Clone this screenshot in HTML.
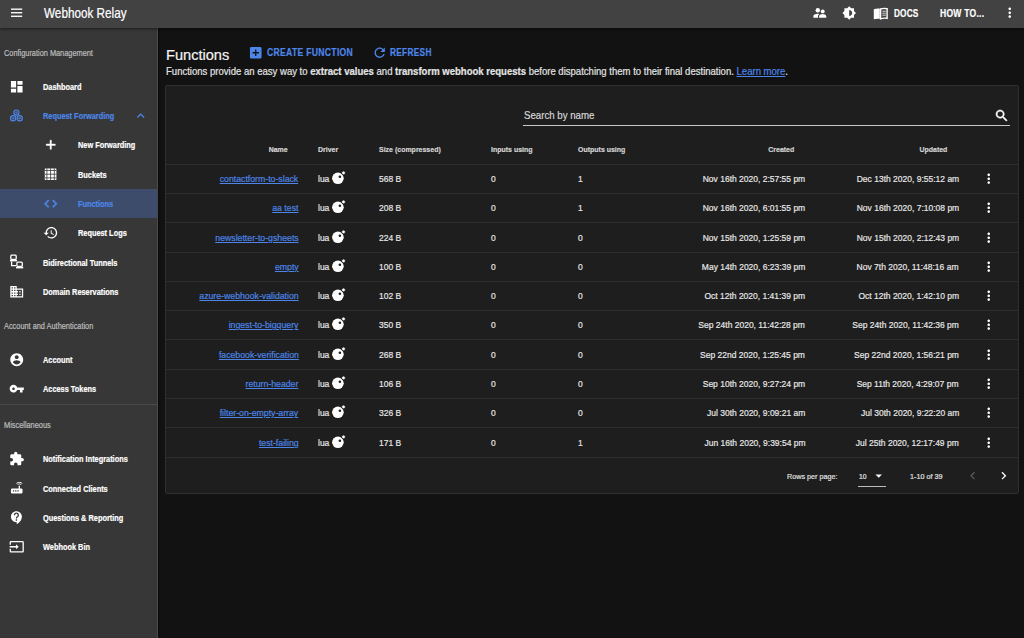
<!DOCTYPE html>
<html><head><meta charset="utf-8">
<style>
*{box-sizing:border-box;margin:0;padding:0}
html,body{width:1024px;height:638px;overflow:hidden;background:#121212;font-family:"Liberation Sans",sans-serif;color:#fff;position:relative}
.t{position:absolute;white-space:nowrap;-webkit-text-stroke:0.2px currentColor}
#appbar{position:absolute;left:0;top:0;width:1024px;height:28px;background:#424242;box-shadow:0 1px 3px rgba(0,0,0,.5);z-index:5}
#side{position:absolute;left:0;top:28px;width:158px;height:610px;background:#373737;border-right:1px solid #4a4a4a;box-shadow:1px 0 2px rgba(0,0,0,.45)}
.ic{position:absolute;fill:#fff;overflow:visible}
#card{position:absolute;left:165px;top:85px;width:854px;height:409px;background:#1e1e1e;border:1px solid #2f2f2f;border-radius:2px}
.hl{position:absolute;left:166px;width:852px;height:1px;background:#2e2e2e}
a{color:#4d86e8;text-decoration:underline}
</style></head><body>
<div id="appbar">
<svg class="ic" style="left:0;top:0" width="40" height="28" viewBox="0 0 40 28"><rect x="11" y="8.5" width="11.2" height="1.35"/><rect x="11" y="12.05" width="11.2" height="1.35"/><rect x="11" y="15.6" width="11.2" height="1.35"/></svg>
<div class="t" style="left:43.50px;top:5.00px;font-size:13.8px;line-height:18px;font-weight:400;color:#fff;transform:scaleX(0.850);transform-origin:left center;">Webhook Relay</div>
<svg class="ic" style="left:0;top:0" width="1024" height="28" viewBox="0 0 1024 28"><circle cx="817.8" cy="10.2" r="2.2"/><circle cx="822.7" cy="11.4" r="1.95"/><path d="M813.4 17.7v-1.6c0-1.4 2-2.3 4.2-2.3 .6 0 1.2.1 1.7.2-.8.5-1.3 1.2-1.3 2.1v1.6z"/><path d="M819.1 17.7v-1.5c0-1.5 2.1-2.3 3.6-2.3s3.5.8 3.5 2.3v1.5z"/></svg>
<svg class="ic" style="left:0;top:0" width="1024" height="28" viewBox="0 0 1024 28"><g transform="translate(849.2 13) scale(0.6) translate(-12 -12)"><path fill-rule="evenodd" d="M20 15.31L23.31 12 20 8.69V4h-4.69L12 .69 8.69 4H4v4.69L.69 12 4 15.31V20h4.69L12 23.31 15.31 20H20v-4.69zM12 17V7c2.76 0 5 2.24 5 5s-2.24 5-5 5z"/></g></svg>
<svg class="ic" style="left:0;top:0" width="1024" height="28" viewBox="0 0 1024 28"><path d="M873.8 9.3c1.7-.8 3.6-1 6-.8V18.9c-2.3-.3-4.2-.1-6 .4z"/><path fill="none" stroke="#fff" stroke-width="1.4" d="M880.6 9.0c1.9-.7 3.7-.8 6.5-.3V18.3c-2.4-.4-4.5-.3-6.5.5z"/><path fill="none" stroke="#fff" stroke-width="0.8" d="M882.4 11.2h3.4M882.4 13.2h3.4M882.4 15.2h3.4"/></svg>
<div class="t" style="left:893.80px;top:6.75px;font-size:10.3px;line-height:13px;font-weight:700;color:#fff;transform:scaleX(0.800);transform-origin:left center;letter-spacing:0.2px">DOCS</div>
<div class="t" style="left:939.60px;top:6.75px;font-size:10.3px;line-height:13px;font-weight:700;color:#fff;transform:scaleX(0.830);transform-origin:left center;letter-spacing:0.3px">HOW TO...</div>
<svg class="ic" style="left:1001.76px;top:5.06px;fill:#fff" width="15.48" height="15.48" viewBox="0 0 24 24"><path d="M12 8c1.1 0 2-.9 2-2s-.9-2-2-2-2 .9-2 2 .9 2 2 2zm0 2c-1.1 0-2 .9-2 2s.9 2 2 2 2-.9 2-2-.9-2-2-2zm0 6c-1.1 0-2 .9-2 2s.9 2 2 2 2-.9 2-2-.9-2-2-2z"/></svg>
</div>
<div id="side"></div>
<div style="position:absolute;left:0;top:189px;width:157px;height:29px;background:#3d4c6a"></div>
<div class="t" style="left:4.20px;top:47.90px;font-size:8.2px;line-height:11px;font-weight:400;color:#bdbdbd;transform:scaleX(0.900);transform-origin:left center;">Configuration Management</div>
<div class="t" style="left:4.20px;top:321.20px;font-size:8.2px;line-height:11px;font-weight:400;color:#bdbdbd;transform:scaleX(0.900);transform-origin:left center;">Account and Authentication</div>
<div class="t" style="left:4.20px;top:420.10px;font-size:8.2px;line-height:11px;font-weight:400;color:#bdbdbd;transform:scaleX(0.900);transform-origin:left center;">Miscellaneous</div>
<div class="t" style="left:43.30px;top:81.80px;font-size:8.4px;line-height:11px;font-weight:700;color:#fff;transform:scaleX(0.880);transform-origin:left center;">Dashboard</div>
<svg class="ic" style="left:8.66px;top:78.76px;fill:#fff" width="15.48" height="15.48" viewBox="0 0 24 24"><path d="M3 13h8V3H3v10zm0 8h8v-6H3v6zm10 0h8V11h-8v10zm0-18v6h8V3h-8z"/></svg>
<div class="t" style="left:43.30px;top:111.10px;font-size:8.4px;line-height:11px;font-weight:700;color:#4d86e8;transform:scaleX(0.880);transform-origin:left center;">Request Forwarding</div>
<div class="t" style="left:77.70px;top:139.70px;font-size:8.4px;line-height:11px;font-weight:700;color:#fff;transform:scaleX(0.880);transform-origin:left center;">New Forwarding</div>
<svg class="ic" style="left:42.86px;top:136.66px;fill:#fff" width="15.48" height="15.48" viewBox="0 0 24 24"><path stroke="#fff" stroke-width="0.8" d="M19 13h-6v6h-2v-6H5v-2h6V5h2v6h6v2z"/></svg>
<div class="t" style="left:77.70px;top:169.90px;font-size:8.4px;line-height:11px;font-weight:700;color:#fff;transform:scaleX(0.880);transform-origin:left center;">Buckets</div>
<div class="t" style="left:77.70px;top:199.00px;font-size:8.4px;line-height:11px;font-weight:700;color:#4d86e8;transform:scaleX(0.880);transform-origin:left center;">Functions</div>
<svg class="ic" style="left:42.86px;top:195.96px;fill:#4d86e8" width="15.48" height="15.48" viewBox="0 0 24 24"><path stroke="#4d86e8" stroke-width="0.8" d="M9.4 16.6L4.8 12l4.6-4.6L8 6l-6 6 6 6 1.4-1.4zm5.2 0l4.6-4.6-4.6-4.6L16 6l6 6-6 6-1.4-1.4z"/></svg>
<div class="t" style="left:77.70px;top:228.30px;font-size:8.4px;line-height:11px;font-weight:700;color:#fff;transform:scaleX(0.880);transform-origin:left center;">Request Logs</div>
<svg class="ic" style="left:42.86px;top:225.26px;fill:#fff" width="15.48" height="15.48" viewBox="0 0 24 24"><path d="M13 3c-4.97 0-9 4.03-9 9H1l3.89 3.89.07.14L9 12H6c0-3.87 3.13-7 7-7s7 3.13 7 7-3.13 7-7 7c-1.93 0-3.68-.79-4.94-2.06l-1.42 1.42C8.27 19.99 10.51 21 13 21c4.97 0 9-4.03 9-9s-4.03-9-9-9zm-1 5v5l4.28 2.54.72-1.21-3.5-2.08V8H12z"/></svg>
<div class="t" style="left:43.30px;top:257.70px;font-size:8.4px;line-height:11px;font-weight:700;color:#fff;transform:scaleX(0.880);transform-origin:left center;">Bidirectional Tunnels</div>
<div class="t" style="left:43.30px;top:286.90px;font-size:8.4px;line-height:11px;font-weight:700;color:#fff;transform:scaleX(0.880);transform-origin:left center;">Domain Reservations</div>
<svg class="ic" style="left:8.66px;top:283.86px;fill:#fff" width="15.48" height="15.48" viewBox="0 0 24 24"><path d="M12 7V3H2v18h20V7H12zM6 19H4v-2h2v2zm0-4H4v-2h2v2zm0-4H4V9h2v2zm0-4H4V5h2v2zm4 12H8v-2h2v2zm0-4H8v-2h2v2zm0-4H8V9h2v2zm0-4H8V5h2v2zm10 12h-8v-2h2v-2h-2v-2h2v-2h-2V9h8v10zm-2-8h-2v2h2v-2zm0 4h-2v2h2v-2z"/></svg>
<div class="t" style="left:43.30px;top:354.80px;font-size:8.4px;line-height:11px;font-weight:700;color:#fff;transform:scaleX(0.880);transform-origin:left center;">Account</div>
<svg class="ic" style="left:8.66px;top:351.76px;fill:#fff" width="15.48" height="15.48" viewBox="0 0 24 24"><path d="M12 2C6.48 2 2 6.48 2 12s4.48 10 10 10 10-4.48 10-10S17.52 2 12 2zm0 3c1.66 0 3 1.34 3 3s-1.34 3-3 3-3-1.34-3-3 1.34-3 3-3zm0 14.2c-2.5 0-4.710-1.28-6-3.22.03-1.99 4-3.08 6-3.08 1.99 0 5.970 1.09 6 3.08-1.29 1.94-3.5 3.22-6 3.22z"/></svg>
<div class="t" style="left:43.30px;top:384.40px;font-size:8.4px;line-height:11px;font-weight:700;color:#fff;transform:scaleX(0.880);transform-origin:left center;">Access Tokens</div>
<svg class="ic" style="left:8.66px;top:381.36px;fill:#fff" width="15.48" height="15.48" viewBox="0 0 24 24"><path d="M12.65 10C11.83 7.67 9.61 6 7 6c-3.31 0-6 2.69-6 6s2.69 6 6 6c2.61 0 4.83-1.67 5.65-4H17v4h4v-4h2v-4H12.65zM7 14c-1.1 0-2-.9-2-2s.9-2 2-2 2 .9 2 2-.9 2-2 2z"/></svg>
<div class="t" style="left:43.30px;top:454.20px;font-size:8.4px;line-height:11px;font-weight:700;color:#fff;transform:scaleX(0.880);transform-origin:left center;">Notification Integrations</div>
<svg class="ic" style="left:8.66px;top:451.16px;fill:#fff" width="15.48" height="15.48" viewBox="0 0 24 24"><path d="M20.5 11H19V7c0-1.1-.9-2-2-2h-4V3.5C13 2.12 11.880 1 10.5 1S8 2.12 8 3.5V5H4c-1.1 0-1.99.9-1.99 2v3.8H3.5c1.49 0 2.7 1.21 2.7 2.7s-1.21 2.7-2.7 2.7H2V20c0 1.1.9 2 2 2h3.8v-1.5c0-1.49 1.21-2.7 2.7-2.7 1.49 0 2.7 1.21 2.7 2.7V22H17c1.1 0 2-.9 2-2v-4h1.5c1.38 0 2.5-1.12 2.5-2.5S21.88 11 20.5 11z"/></svg>
<div class="t" style="left:43.30px;top:483.50px;font-size:8.4px;line-height:11px;font-weight:700;color:#fff;transform:scaleX(0.880);transform-origin:left center;">Connected Clients</div>
<svg class="ic" style="left:8.66px;top:480.46px;fill:#fff" width="15.48" height="15.48" viewBox="0 0 24 24"><path d="M20.2 5.9l.8-.8C19.6 3.7 17.8 3 16 3s-3.6.7-5 2.1l.8.8C13 4.8 14.5 4.2 16 4.2s3 .6 4.2 1.7zm-.9.8c-.9-.9-2.1-1.4-3.3-1.4s-2.4.5-3.3 1.4l.8.8c.7-.7 1.6-1 2.5-1 .9 0 1.8.3 2.5 1l.8-.8zM19 13h-2V9h-2v4H5c-1.1 0-2 .9-2 2v4c0 1.1.9 2 2 2h14c1.1 0 2-.9 2-2v-4c0-1.1-.9-2-2-2zM8 18H6v-2h2v2zm3.5 0h-2v-2h2v2zm3.5 0h-2v-2h2v2z"/></svg>
<div class="t" style="left:43.30px;top:512.60px;font-size:8.4px;line-height:11px;font-weight:700;color:#fff;transform:scaleX(0.880);transform-origin:left center;">Questions &amp; Reporting</div>
<svg class="ic" style="left:8.66px;top:509.56px;fill:#fff" width="15.48" height="15.48" viewBox="0 0 24 24"><path d="M11.5 2C6.81 2 3 5.81 3 10.5S6.81 19 11.5 19h.5v3c4.86-2.34 8-7 8-11.5C20 5.81 16.19 2 11.5 2zm1 14.5h-2v-2h2v2zm0-3.5h-2c0-3.25 3-3 3-5 0-1.1-.9-2-2-2s-2 .9-2 2h-2c0-2.21 1.79-4 4-4s4 1.79 4 4c0 2.5-3 2.75-3 5z"/></svg>
<div class="t" style="left:43.30px;top:542.20px;font-size:8.4px;line-height:11px;font-weight:700;color:#fff;transform:scaleX(0.880);transform-origin:left center;">Webhook Bin</div>
<svg class="ic" style="left:8.66px;top:539.16px;fill:#fff" width="15.48" height="15.48" viewBox="0 0 24 24"><path d="M21 3.01H3c-1.1 0-2 .9-2 2V9h2V4.99h18v14.03H3V15H1v4.01c0 1.1.9 1.98 2 1.98h18c1.1 0 2-.88 2-1.980v-14c0-1.11-.9-2-2-2zM11 16l4-4-4-4v3H1v2h10v3z"/></svg>
<svg class="ic" style="left:132.86px;top:108.06px;fill:#4d86e8" width="15.48" height="15.48" viewBox="0 0 24 24"><path d="M12 8l-6 6 1.41 1.41L12 10.83l4.59 4.58L18 14z"/></svg>
<svg class="ic" style="left:0;top:0;fill:none" width="160" height="300" viewBox="0 0 160 300"><g stroke="#4d86e8" stroke-width="1.2" fill="none"><circle cx="16.4" cy="112.6" r="2.6"/><circle cx="13.1" cy="118.2" r="2.6"/><circle cx="19.7" cy="118.2" r="2.6"/></g><g fill="#4d86e8" opacity="0.75"><circle cx="16.4" cy="112.6" r="1.3"/><circle cx="13.1" cy="118.2" r="1.3"/><circle cx="19.7" cy="118.2" r="1.3"/></g></svg>
<svg class="ic" style="left:0;top:0" width="160" height="300" viewBox="0 0 160 300"><rect x="44.8" y="168.4" width="11.6" height="11.6" rx="0.5"/><g stroke="#393939" stroke-width="0.8" fill="none"><path d="M46.9 168.4v11.6M50.6 168.4v11.6M54.3 168.4v11.6M44.8 170.5h11.6M44.8 174.2h11.6M44.8 177.9h11.6"/></g></svg>
<svg class="ic" style="left:0;top:0" width="160" height="300" viewBox="0 0 160 300"><g fill="none" stroke="#fff" stroke-width="1.3"><rect x="10.8" y="255.2" width="5.4" height="4.3" rx="1"/><rect x="16.9" y="262.1" width="5.4" height="4.3" rx="1"/><path d="M11.6 261.5v4.2h4.6"/></g><rect x="9.9" y="259.9" width="7.2" height="1.5"/><rect x="16" y="266.9" width="7.2" height="1.5"/></svg>
<div style="position:absolute;left:0;top:404px;width:157px;height:1px;background:#4a4a4a"></div>
<div class="t" style="left:165.50px;top:45.70px;font-size:14.9px;line-height:18px;font-weight:400;color:#f2f2f2;transform:scaleX(0.980);transform-origin:left center;">Functions</div>
<svg class="ic" style="left:248.16px;top:45.36px;fill:#4d86e8" width="15.48" height="15.48" viewBox="0 0 24 24"><path d="M19 3H5c-1.11 0-2 .9-2 2v14c0 1.1.89 2 2 2h14c1.1 0 2-.9 2-2V5c0-1.1-.9-2-2-2zm-2 10h-4v4h-2v-4H7v-2h4V7h2v4h4v2z"/></svg>
<div class="t" style="left:266.60px;top:46.10px;font-size:10.4px;line-height:14px;font-weight:700;color:#4d86e8;transform:scaleX(0.830);transform-origin:left center;letter-spacing:0.35px">CREATE FUNCTION</div>
<svg class="ic" style="left:371.66px;top:45.36px;fill:#4d86e8" width="15.48" height="15.48" viewBox="0 0 24 24"><path d="M17.65 6.35C16.2 4.9 14.21 4 12 4c-4.42 0-7.99 3.58-7.99 8s3.57 8 7.99 8c3.73 0 6.84-2.55 7.73-6h-2.08c-.82 2.33-3.04 4-5.65 4-3.31 0-6-2.69-6-6s2.69-6 6-6c1.66 0 3.14.69 4.22 1.78L13 11h7V4l-2.35 2.35z"/></svg>
<div class="t" style="left:389.70px;top:46.10px;font-size:10.4px;line-height:14px;font-weight:700;color:#4d86e8;transform:scaleX(0.800);transform-origin:left center;letter-spacing:0.35px">REFRESH</div>
<div class="t" style="left:166.00px;top:64.50px;font-size:10.4px;line-height:14px;font-weight:400;color:#e4e4e4;transform:scaleX(0.918);transform-origin:left center;">Functions provide an easy way to <b>extract values</b> and <b>transform webhook requests</b> before dispatching them to their final destination. <a>Learn more</a>.</div>
<div id="card"></div>
<div class="t" style="left:523.50px;top:108.60px;font-size:10.4px;line-height:14px;font-weight:400;color:#d6d6d6;transform:scaleX(0.930);transform-origin:left center;">Search by name</div>
<div style="position:absolute;left:523px;top:125px;width:487px;height:1px;background:#c8c8c8"></div>
<svg class="ic" style="left:993.76px;top:107.76px;fill:#fff" width="15.48" height="15.48" viewBox="0 0 24 24"><path stroke="#fff" stroke-width="0.7" d="M15.5 14h-.79l-.28-.27C15.41 12.59 16 11.11 16 9.5 16 5.910 13.09 3 9.5 3S3 5.91 3 9.5 5.91 16 9.5 16c1.61 0 3.09-.59 4.23-1.57l.27.28v.79l5 4.99L20.49 19l-4.99-5zm-6 0C7.01 14 5 11.99 5 9.5S7.01 5 9.5 5 14 7.01 14 9.5 11.99 14 9.5 14z"/></svg>
<div class="t" style="right:736.50px;top:144.60px;font-size:7.6px;line-height:10px;font-weight:700;color:#d4d4d4;transform:scaleX(0.920);transform-origin:right center;">Name</div>
<div class="t" style="left:317.60px;top:144.60px;font-size:7.6px;line-height:10px;font-weight:700;color:#d4d4d4;transform:scaleX(0.920);transform-origin:left center;">Driver</div>
<div class="t" style="left:378.90px;top:144.60px;font-size:7.6px;line-height:10px;font-weight:700;color:#d4d4d4;transform:scaleX(0.920);transform-origin:left center;">Size (compressed)</div>
<div class="t" style="left:491.40px;top:144.60px;font-size:7.6px;line-height:10px;font-weight:700;color:#d4d4d4;transform:scaleX(0.920);transform-origin:left center;">Inputs using</div>
<div class="t" style="left:578.00px;top:144.60px;font-size:7.6px;line-height:10px;font-weight:700;color:#d4d4d4;transform:scaleX(0.920);transform-origin:left center;">Outputs using</div>
<div class="t" style="right:229.80px;top:144.60px;font-size:7.6px;line-height:10px;font-weight:700;color:#d4d4d4;transform:scaleX(0.920);transform-origin:right center;">Created</div>
<div class="t" style="right:76.30px;top:144.60px;font-size:7.6px;line-height:10px;font-weight:700;color:#d4d4d4;transform:scaleX(0.920);transform-origin:right center;">Updated</div>
<div class="hl" style="top:164px"></div>
<div class="hl" style="top:193px"></div>
<div class="hl" style="top:222px"></div>
<div class="hl" style="top:252px"></div>
<div class="hl" style="top:281px"></div>
<div class="hl" style="top:310px"></div>
<div class="hl" style="top:339px"></div>
<div class="hl" style="top:369px"></div>
<div class="hl" style="top:398px"></div>
<div class="hl" style="top:427px"></div>
<div class="hl" style="top:457px"></div>
<div class="t" style="right:725.60px;top:172.30px;font-size:9.8px;line-height:13px;font-weight:400;color:#4d86e8;transform:scaleX(0.890);transform-origin:right center;"><a>contactform-to-slack</a></div>
<div class="t" style="left:317.60px;top:172.30px;font-size:9.8px;line-height:13px;font-weight:400;color:#e8e8e8;transform:scaleX(0.867);transform-origin:left center;">lua</div>
<svg class="ic" style="left:331px;top:170.00px" width="16" height="16" viewBox="0 0 16 16"><circle cx="6.9" cy="8.3" r="5.8" fill="#fff"/><circle cx="8.9" cy="6.7" r="1.3" fill="#1e1e1e"/><circle cx="12.5" cy="2.9" r="1.9" fill="#fff" stroke="#1e1e1e" stroke-width="0.9"/></svg>
<div class="t" style="left:378.90px;top:172.30px;font-size:9.8px;line-height:13px;font-weight:400;color:#e8e8e8;transform:scaleX(0.867);transform-origin:left center;">568 B</div>
<div class="t" style="left:491.40px;top:172.30px;font-size:9.8px;line-height:13px;font-weight:400;color:#e8e8e8;transform:scaleX(0.867);transform-origin:left center;">0</div>
<div class="t" style="left:578.00px;top:172.30px;font-size:9.8px;line-height:13px;font-weight:400;color:#e8e8e8;transform:scaleX(0.867);transform-origin:left center;">1</div>
<div class="t" style="right:218.70px;top:172.30px;font-size:9.8px;line-height:13px;font-weight:400;color:#e8e8e8;transform:scaleX(0.867);transform-origin:right center;">Nov 16th 2020, 2:57:55 pm</div>
<div class="t" style="right:65.20px;top:172.30px;font-size:9.8px;line-height:13px;font-weight:400;color:#e8e8e8;transform:scaleX(0.867);transform-origin:right center;">Dec 13th 2020, 9:55:12 am</div>
<svg class="ic" style="left:981.26px;top:171.06px;fill:#fff" width="15.48" height="15.48" viewBox="0 0 24 24"><path d="M12 8c1.1 0 2-.9 2-2s-.9-2-2-2-2 .9-2 2 .9 2 2 2zm0 2c-1.1 0-2 .9-2 2s.9 2 2 2 2-.9 2-2-.9-2-2-2zm0 6c-1.1 0-2 .9-2 2s.9 2 2 2 2-.9 2-2-.9-2-2-2z"/></svg>
<div class="t" style="right:725.60px;top:201.30px;font-size:9.8px;line-height:13px;font-weight:400;color:#4d86e8;transform:scaleX(0.890);transform-origin:right center;"><a>aa test</a></div>
<div class="t" style="left:317.60px;top:201.30px;font-size:9.8px;line-height:13px;font-weight:400;color:#e8e8e8;transform:scaleX(0.867);transform-origin:left center;">lua</div>
<svg class="ic" style="left:331px;top:199.00px" width="16" height="16" viewBox="0 0 16 16"><circle cx="6.9" cy="8.3" r="5.8" fill="#fff"/><circle cx="8.9" cy="6.7" r="1.3" fill="#1e1e1e"/><circle cx="12.5" cy="2.9" r="1.9" fill="#fff" stroke="#1e1e1e" stroke-width="0.9"/></svg>
<div class="t" style="left:378.90px;top:201.30px;font-size:9.8px;line-height:13px;font-weight:400;color:#e8e8e8;transform:scaleX(0.867);transform-origin:left center;">208 B</div>
<div class="t" style="left:491.40px;top:201.30px;font-size:9.8px;line-height:13px;font-weight:400;color:#e8e8e8;transform:scaleX(0.867);transform-origin:left center;">0</div>
<div class="t" style="left:578.00px;top:201.30px;font-size:9.8px;line-height:13px;font-weight:400;color:#e8e8e8;transform:scaleX(0.867);transform-origin:left center;">1</div>
<div class="t" style="right:218.70px;top:201.30px;font-size:9.8px;line-height:13px;font-weight:400;color:#e8e8e8;transform:scaleX(0.867);transform-origin:right center;">Nov 16th 2020, 6:01:55 pm</div>
<div class="t" style="right:65.20px;top:201.30px;font-size:9.8px;line-height:13px;font-weight:400;color:#e8e8e8;transform:scaleX(0.867);transform-origin:right center;">Nov 16th 2020, 7:10:08 pm</div>
<svg class="ic" style="left:981.26px;top:200.06px;fill:#fff" width="15.48" height="15.48" viewBox="0 0 24 24"><path d="M12 8c1.1 0 2-.9 2-2s-.9-2-2-2-2 .9-2 2 .9 2 2 2zm0 2c-1.1 0-2 .9-2 2s.9 2 2 2 2-.9 2-2-.9-2-2-2zm0 6c-1.1 0-2 .9-2 2s.9 2 2 2 2-.9 2-2-.9-2-2-2z"/></svg>
<div class="t" style="right:725.60px;top:230.80px;font-size:9.8px;line-height:13px;font-weight:400;color:#4d86e8;transform:scaleX(0.890);transform-origin:right center;"><a>newsletter-to-gsheets</a></div>
<div class="t" style="left:317.60px;top:230.80px;font-size:9.8px;line-height:13px;font-weight:400;color:#e8e8e8;transform:scaleX(0.867);transform-origin:left center;">lua</div>
<svg class="ic" style="left:331px;top:228.50px" width="16" height="16" viewBox="0 0 16 16"><circle cx="6.9" cy="8.3" r="5.8" fill="#fff"/><circle cx="8.9" cy="6.7" r="1.3" fill="#1e1e1e"/><circle cx="12.5" cy="2.9" r="1.9" fill="#fff" stroke="#1e1e1e" stroke-width="0.9"/></svg>
<div class="t" style="left:378.90px;top:230.80px;font-size:9.8px;line-height:13px;font-weight:400;color:#e8e8e8;transform:scaleX(0.867);transform-origin:left center;">224 B</div>
<div class="t" style="left:491.40px;top:230.80px;font-size:9.8px;line-height:13px;font-weight:400;color:#e8e8e8;transform:scaleX(0.867);transform-origin:left center;">0</div>
<div class="t" style="left:578.00px;top:230.80px;font-size:9.8px;line-height:13px;font-weight:400;color:#e8e8e8;transform:scaleX(0.867);transform-origin:left center;">0</div>
<div class="t" style="right:218.70px;top:230.80px;font-size:9.8px;line-height:13px;font-weight:400;color:#e8e8e8;transform:scaleX(0.867);transform-origin:right center;">Nov 15th 2020, 1:25:59 pm</div>
<div class="t" style="right:65.20px;top:230.80px;font-size:9.8px;line-height:13px;font-weight:400;color:#e8e8e8;transform:scaleX(0.867);transform-origin:right center;">Nov 15th 2020, 2:12:43 pm</div>
<svg class="ic" style="left:981.26px;top:229.56px;fill:#fff" width="15.48" height="15.48" viewBox="0 0 24 24"><path d="M12 8c1.1 0 2-.9 2-2s-.9-2-2-2-2 .9-2 2 .9 2 2 2zm0 2c-1.1 0-2 .9-2 2s.9 2 2 2 2-.9 2-2-.9-2-2-2zm0 6c-1.1 0-2 .9-2 2s.9 2 2 2 2-.9 2-2-.9-2-2-2z"/></svg>
<div class="t" style="right:725.60px;top:260.30px;font-size:9.8px;line-height:13px;font-weight:400;color:#4d86e8;transform:scaleX(0.890);transform-origin:right center;"><a>empty</a></div>
<div class="t" style="left:317.60px;top:260.30px;font-size:9.8px;line-height:13px;font-weight:400;color:#e8e8e8;transform:scaleX(0.867);transform-origin:left center;">lua</div>
<svg class="ic" style="left:331px;top:258.00px" width="16" height="16" viewBox="0 0 16 16"><circle cx="6.9" cy="8.3" r="5.8" fill="#fff"/><circle cx="8.9" cy="6.7" r="1.3" fill="#1e1e1e"/><circle cx="12.5" cy="2.9" r="1.9" fill="#fff" stroke="#1e1e1e" stroke-width="0.9"/></svg>
<div class="t" style="left:378.90px;top:260.30px;font-size:9.8px;line-height:13px;font-weight:400;color:#e8e8e8;transform:scaleX(0.867);transform-origin:left center;">100 B</div>
<div class="t" style="left:491.40px;top:260.30px;font-size:9.8px;line-height:13px;font-weight:400;color:#e8e8e8;transform:scaleX(0.867);transform-origin:left center;">0</div>
<div class="t" style="left:578.00px;top:260.30px;font-size:9.8px;line-height:13px;font-weight:400;color:#e8e8e8;transform:scaleX(0.867);transform-origin:left center;">0</div>
<div class="t" style="right:218.70px;top:260.30px;font-size:9.8px;line-height:13px;font-weight:400;color:#e8e8e8;transform:scaleX(0.867);transform-origin:right center;">May 14th 2020, 6:23:39 pm</div>
<div class="t" style="right:65.20px;top:260.30px;font-size:9.8px;line-height:13px;font-weight:400;color:#e8e8e8;transform:scaleX(0.867);transform-origin:right center;">Nov 7th 2020, 11:48:16 am</div>
<svg class="ic" style="left:981.26px;top:259.06px;fill:#fff" width="15.48" height="15.48" viewBox="0 0 24 24"><path d="M12 8c1.1 0 2-.9 2-2s-.9-2-2-2-2 .9-2 2 .9 2 2 2zm0 2c-1.1 0-2 .9-2 2s.9 2 2 2 2-.9 2-2-.9-2-2-2zm0 6c-1.1 0-2 .9-2 2s.9 2 2 2 2-.9 2-2-.9-2-2-2z"/></svg>
<div class="t" style="right:725.60px;top:289.30px;font-size:9.8px;line-height:13px;font-weight:400;color:#4d86e8;transform:scaleX(0.890);transform-origin:right center;"><a>azure-webhook-validation</a></div>
<div class="t" style="left:317.60px;top:289.30px;font-size:9.8px;line-height:13px;font-weight:400;color:#e8e8e8;transform:scaleX(0.867);transform-origin:left center;">lua</div>
<svg class="ic" style="left:331px;top:287.00px" width="16" height="16" viewBox="0 0 16 16"><circle cx="6.9" cy="8.3" r="5.8" fill="#fff"/><circle cx="8.9" cy="6.7" r="1.3" fill="#1e1e1e"/><circle cx="12.5" cy="2.9" r="1.9" fill="#fff" stroke="#1e1e1e" stroke-width="0.9"/></svg>
<div class="t" style="left:378.90px;top:289.30px;font-size:9.8px;line-height:13px;font-weight:400;color:#e8e8e8;transform:scaleX(0.867);transform-origin:left center;">102 B</div>
<div class="t" style="left:491.40px;top:289.30px;font-size:9.8px;line-height:13px;font-weight:400;color:#e8e8e8;transform:scaleX(0.867);transform-origin:left center;">0</div>
<div class="t" style="left:578.00px;top:289.30px;font-size:9.8px;line-height:13px;font-weight:400;color:#e8e8e8;transform:scaleX(0.867);transform-origin:left center;">0</div>
<div class="t" style="right:218.70px;top:289.30px;font-size:9.8px;line-height:13px;font-weight:400;color:#e8e8e8;transform:scaleX(0.867);transform-origin:right center;">Oct 12th 2020, 1:41:39 pm</div>
<div class="t" style="right:65.20px;top:289.30px;font-size:9.8px;line-height:13px;font-weight:400;color:#e8e8e8;transform:scaleX(0.867);transform-origin:right center;">Oct 12th 2020, 1:42:10 pm</div>
<svg class="ic" style="left:981.26px;top:288.06px;fill:#fff" width="15.48" height="15.48" viewBox="0 0 24 24"><path d="M12 8c1.1 0 2-.9 2-2s-.9-2-2-2-2 .9-2 2 .9 2 2 2zm0 2c-1.1 0-2 .9-2 2s.9 2 2 2 2-.9 2-2-.9-2-2-2zm0 6c-1.1 0-2 .9-2 2s.9 2 2 2 2-.9 2-2-.9-2-2-2z"/></svg>
<div class="t" style="right:725.60px;top:318.30px;font-size:9.8px;line-height:13px;font-weight:400;color:#4d86e8;transform:scaleX(0.890);transform-origin:right center;"><a>ingest-to-bigquery</a></div>
<div class="t" style="left:317.60px;top:318.30px;font-size:9.8px;line-height:13px;font-weight:400;color:#e8e8e8;transform:scaleX(0.867);transform-origin:left center;">lua</div>
<svg class="ic" style="left:331px;top:316.00px" width="16" height="16" viewBox="0 0 16 16"><circle cx="6.9" cy="8.3" r="5.8" fill="#fff"/><circle cx="8.9" cy="6.7" r="1.3" fill="#1e1e1e"/><circle cx="12.5" cy="2.9" r="1.9" fill="#fff" stroke="#1e1e1e" stroke-width="0.9"/></svg>
<div class="t" style="left:378.90px;top:318.30px;font-size:9.8px;line-height:13px;font-weight:400;color:#e8e8e8;transform:scaleX(0.867);transform-origin:left center;">350 B</div>
<div class="t" style="left:491.40px;top:318.30px;font-size:9.8px;line-height:13px;font-weight:400;color:#e8e8e8;transform:scaleX(0.867);transform-origin:left center;">0</div>
<div class="t" style="left:578.00px;top:318.30px;font-size:9.8px;line-height:13px;font-weight:400;color:#e8e8e8;transform:scaleX(0.867);transform-origin:left center;">0</div>
<div class="t" style="right:218.70px;top:318.30px;font-size:9.8px;line-height:13px;font-weight:400;color:#e8e8e8;transform:scaleX(0.867);transform-origin:right center;">Sep 24th 2020, 11:42:28 pm</div>
<div class="t" style="right:65.20px;top:318.30px;font-size:9.8px;line-height:13px;font-weight:400;color:#e8e8e8;transform:scaleX(0.867);transform-origin:right center;">Sep 24th 2020, 11:42:36 pm</div>
<svg class="ic" style="left:981.26px;top:317.06px;fill:#fff" width="15.48" height="15.48" viewBox="0 0 24 24"><path d="M12 8c1.1 0 2-.9 2-2s-.9-2-2-2-2 .9-2 2 .9 2 2 2zm0 2c-1.1 0-2 .9-2 2s.9 2 2 2 2-.9 2-2-.9-2-2-2zm0 6c-1.1 0-2 .9-2 2s.9 2 2 2 2-.9 2-2-.9-2-2-2z"/></svg>
<div class="t" style="right:725.60px;top:347.80px;font-size:9.8px;line-height:13px;font-weight:400;color:#4d86e8;transform:scaleX(0.890);transform-origin:right center;"><a>facebook-verification</a></div>
<div class="t" style="left:317.60px;top:347.80px;font-size:9.8px;line-height:13px;font-weight:400;color:#e8e8e8;transform:scaleX(0.867);transform-origin:left center;">lua</div>
<svg class="ic" style="left:331px;top:345.50px" width="16" height="16" viewBox="0 0 16 16"><circle cx="6.9" cy="8.3" r="5.8" fill="#fff"/><circle cx="8.9" cy="6.7" r="1.3" fill="#1e1e1e"/><circle cx="12.5" cy="2.9" r="1.9" fill="#fff" stroke="#1e1e1e" stroke-width="0.9"/></svg>
<div class="t" style="left:378.90px;top:347.80px;font-size:9.8px;line-height:13px;font-weight:400;color:#e8e8e8;transform:scaleX(0.867);transform-origin:left center;">268 B</div>
<div class="t" style="left:491.40px;top:347.80px;font-size:9.8px;line-height:13px;font-weight:400;color:#e8e8e8;transform:scaleX(0.867);transform-origin:left center;">0</div>
<div class="t" style="left:578.00px;top:347.80px;font-size:9.8px;line-height:13px;font-weight:400;color:#e8e8e8;transform:scaleX(0.867);transform-origin:left center;">0</div>
<div class="t" style="right:218.70px;top:347.80px;font-size:9.8px;line-height:13px;font-weight:400;color:#e8e8e8;transform:scaleX(0.867);transform-origin:right center;">Sep 22nd 2020, 1:25:45 pm</div>
<div class="t" style="right:65.20px;top:347.80px;font-size:9.8px;line-height:13px;font-weight:400;color:#e8e8e8;transform:scaleX(0.867);transform-origin:right center;">Sep 22nd 2020, 1:56:21 pm</div>
<svg class="ic" style="left:981.26px;top:346.56px;fill:#fff" width="15.48" height="15.48" viewBox="0 0 24 24"><path d="M12 8c1.1 0 2-.9 2-2s-.9-2-2-2-2 .9-2 2 .9 2 2 2zm0 2c-1.1 0-2 .9-2 2s.9 2 2 2 2-.9 2-2-.9-2-2-2zm0 6c-1.1 0-2 .9-2 2s.9 2 2 2 2-.9 2-2-.9-2-2-2z"/></svg>
<div class="t" style="right:725.60px;top:377.30px;font-size:9.8px;line-height:13px;font-weight:400;color:#4d86e8;transform:scaleX(0.890);transform-origin:right center;"><a>return-header</a></div>
<div class="t" style="left:317.60px;top:377.30px;font-size:9.8px;line-height:13px;font-weight:400;color:#e8e8e8;transform:scaleX(0.867);transform-origin:left center;">lua</div>
<svg class="ic" style="left:331px;top:375.00px" width="16" height="16" viewBox="0 0 16 16"><circle cx="6.9" cy="8.3" r="5.8" fill="#fff"/><circle cx="8.9" cy="6.7" r="1.3" fill="#1e1e1e"/><circle cx="12.5" cy="2.9" r="1.9" fill="#fff" stroke="#1e1e1e" stroke-width="0.9"/></svg>
<div class="t" style="left:378.90px;top:377.30px;font-size:9.8px;line-height:13px;font-weight:400;color:#e8e8e8;transform:scaleX(0.867);transform-origin:left center;">106 B</div>
<div class="t" style="left:491.40px;top:377.30px;font-size:9.8px;line-height:13px;font-weight:400;color:#e8e8e8;transform:scaleX(0.867);transform-origin:left center;">0</div>
<div class="t" style="left:578.00px;top:377.30px;font-size:9.8px;line-height:13px;font-weight:400;color:#e8e8e8;transform:scaleX(0.867);transform-origin:left center;">0</div>
<div class="t" style="right:218.70px;top:377.30px;font-size:9.8px;line-height:13px;font-weight:400;color:#e8e8e8;transform:scaleX(0.867);transform-origin:right center;">Sep 10th 2020, 9:27:24 pm</div>
<div class="t" style="right:65.20px;top:377.30px;font-size:9.8px;line-height:13px;font-weight:400;color:#e8e8e8;transform:scaleX(0.867);transform-origin:right center;">Sep 11th 2020, 4:29:07 pm</div>
<svg class="ic" style="left:981.26px;top:376.06px;fill:#fff" width="15.48" height="15.48" viewBox="0 0 24 24"><path d="M12 8c1.1 0 2-.9 2-2s-.9-2-2-2-2 .9-2 2 .9 2 2 2zm0 2c-1.1 0-2 .9-2 2s.9 2 2 2 2-.9 2-2-.9-2-2-2zm0 6c-1.1 0-2 .9-2 2s.9 2 2 2 2-.9 2-2-.9-2-2-2z"/></svg>
<div class="t" style="right:725.60px;top:406.30px;font-size:9.8px;line-height:13px;font-weight:400;color:#4d86e8;transform:scaleX(0.890);transform-origin:right center;"><a>filter-on-empty-array</a></div>
<div class="t" style="left:317.60px;top:406.30px;font-size:9.8px;line-height:13px;font-weight:400;color:#e8e8e8;transform:scaleX(0.867);transform-origin:left center;">lua</div>
<svg class="ic" style="left:331px;top:404.00px" width="16" height="16" viewBox="0 0 16 16"><circle cx="6.9" cy="8.3" r="5.8" fill="#fff"/><circle cx="8.9" cy="6.7" r="1.3" fill="#1e1e1e"/><circle cx="12.5" cy="2.9" r="1.9" fill="#fff" stroke="#1e1e1e" stroke-width="0.9"/></svg>
<div class="t" style="left:378.90px;top:406.30px;font-size:9.8px;line-height:13px;font-weight:400;color:#e8e8e8;transform:scaleX(0.867);transform-origin:left center;">326 B</div>
<div class="t" style="left:491.40px;top:406.30px;font-size:9.8px;line-height:13px;font-weight:400;color:#e8e8e8;transform:scaleX(0.867);transform-origin:left center;">0</div>
<div class="t" style="left:578.00px;top:406.30px;font-size:9.8px;line-height:13px;font-weight:400;color:#e8e8e8;transform:scaleX(0.867);transform-origin:left center;">0</div>
<div class="t" style="right:218.70px;top:406.30px;font-size:9.8px;line-height:13px;font-weight:400;color:#e8e8e8;transform:scaleX(0.867);transform-origin:right center;">Jul 30th 2020, 9:09:21 am</div>
<div class="t" style="right:65.20px;top:406.30px;font-size:9.8px;line-height:13px;font-weight:400;color:#e8e8e8;transform:scaleX(0.867);transform-origin:right center;">Jul 30th 2020, 9:22:20 am</div>
<svg class="ic" style="left:981.26px;top:405.06px;fill:#fff" width="15.48" height="15.48" viewBox="0 0 24 24"><path d="M12 8c1.1 0 2-.9 2-2s-.9-2-2-2-2 .9-2 2 .9 2 2 2zm0 2c-1.1 0-2 .9-2 2s.9 2 2 2 2-.9 2-2-.9-2-2-2zm0 6c-1.1 0-2 .9-2 2s.9 2 2 2 2-.9 2-2-.9-2-2-2z"/></svg>
<div class="t" style="right:725.60px;top:435.80px;font-size:9.8px;line-height:13px;font-weight:400;color:#4d86e8;transform:scaleX(0.890);transform-origin:right center;"><a>test-failing</a></div>
<div class="t" style="left:317.60px;top:435.80px;font-size:9.8px;line-height:13px;font-weight:400;color:#e8e8e8;transform:scaleX(0.867);transform-origin:left center;">lua</div>
<svg class="ic" style="left:331px;top:433.50px" width="16" height="16" viewBox="0 0 16 16"><circle cx="6.9" cy="8.3" r="5.8" fill="#fff"/><circle cx="8.9" cy="6.7" r="1.3" fill="#1e1e1e"/><circle cx="12.5" cy="2.9" r="1.9" fill="#fff" stroke="#1e1e1e" stroke-width="0.9"/></svg>
<div class="t" style="left:378.90px;top:435.80px;font-size:9.8px;line-height:13px;font-weight:400;color:#e8e8e8;transform:scaleX(0.867);transform-origin:left center;">171 B</div>
<div class="t" style="left:491.40px;top:435.80px;font-size:9.8px;line-height:13px;font-weight:400;color:#e8e8e8;transform:scaleX(0.867);transform-origin:left center;">0</div>
<div class="t" style="left:578.00px;top:435.80px;font-size:9.8px;line-height:13px;font-weight:400;color:#e8e8e8;transform:scaleX(0.867);transform-origin:left center;">1</div>
<div class="t" style="right:218.70px;top:435.80px;font-size:9.8px;line-height:13px;font-weight:400;color:#e8e8e8;transform:scaleX(0.867);transform-origin:right center;">Jun 16th 2020, 9:39:54 pm</div>
<div class="t" style="right:65.20px;top:435.80px;font-size:9.8px;line-height:13px;font-weight:400;color:#e8e8e8;transform:scaleX(0.867);transform-origin:right center;">Jul 25th 2020, 12:17:49 pm</div>
<svg class="ic" style="left:981.26px;top:434.56px;fill:#fff" width="15.48" height="15.48" viewBox="0 0 24 24"><path d="M12 8c1.1 0 2-.9 2-2s-.9-2-2-2-2 .9-2 2 .9 2 2 2zm0 2c-1.1 0-2 .9-2 2s.9 2 2 2 2-.9 2-2-.9-2-2-2zm0 6c-1.1 0-2 .9-2 2s.9 2 2 2 2-.9 2-2-.9-2-2-2z"/></svg>
<div class="t" style="left:787.40px;top:471.80px;font-size:8px;line-height:10px;font-weight:400;color:#e0e0e0;transform:scaleX(0.900);transform-origin:left center;">Rows per page:</div>
<div class="t" style="left:858.60px;top:471.80px;font-size:8.0px;line-height:10px;font-weight:400;color:#e8e8e8;transform:scaleX(0.850);transform-origin:left center;">10</div>
<svg class="ic" style="left:871.46px;top:467.76px;fill:#fff" width="15.48" height="15.48" viewBox="0 0 24 24"><path d="M7 10l5 5 5-5z"/></svg>
<div style="position:absolute;left:858px;top:486px;width:28px;height:1px;background:#bdbdbd"></div>
<div class="t" style="left:909.50px;top:471.80px;font-size:8px;line-height:10px;font-weight:400;color:#e0e0e0;transform:scaleX(0.900);transform-origin:left center;">1-10 of 39</div>
<svg class="ic" style="left:965.26px;top:468.26px;fill:#5a5a5a" width="15.48" height="15.48" viewBox="0 0 24 24"><path d="M15.41 7.41L14 6l-6 6 6 6 1.41-1.41L10.83 12z"/></svg>
<svg class="ic" style="left:995.86px;top:468.26px;fill:#fff" width="15.48" height="15.48" viewBox="0 0 24 24"><path d="M10 6L8.59 7.41 13.17 12l-4.58 4.59L10 18l6-6z"/></svg>
</body></html>
